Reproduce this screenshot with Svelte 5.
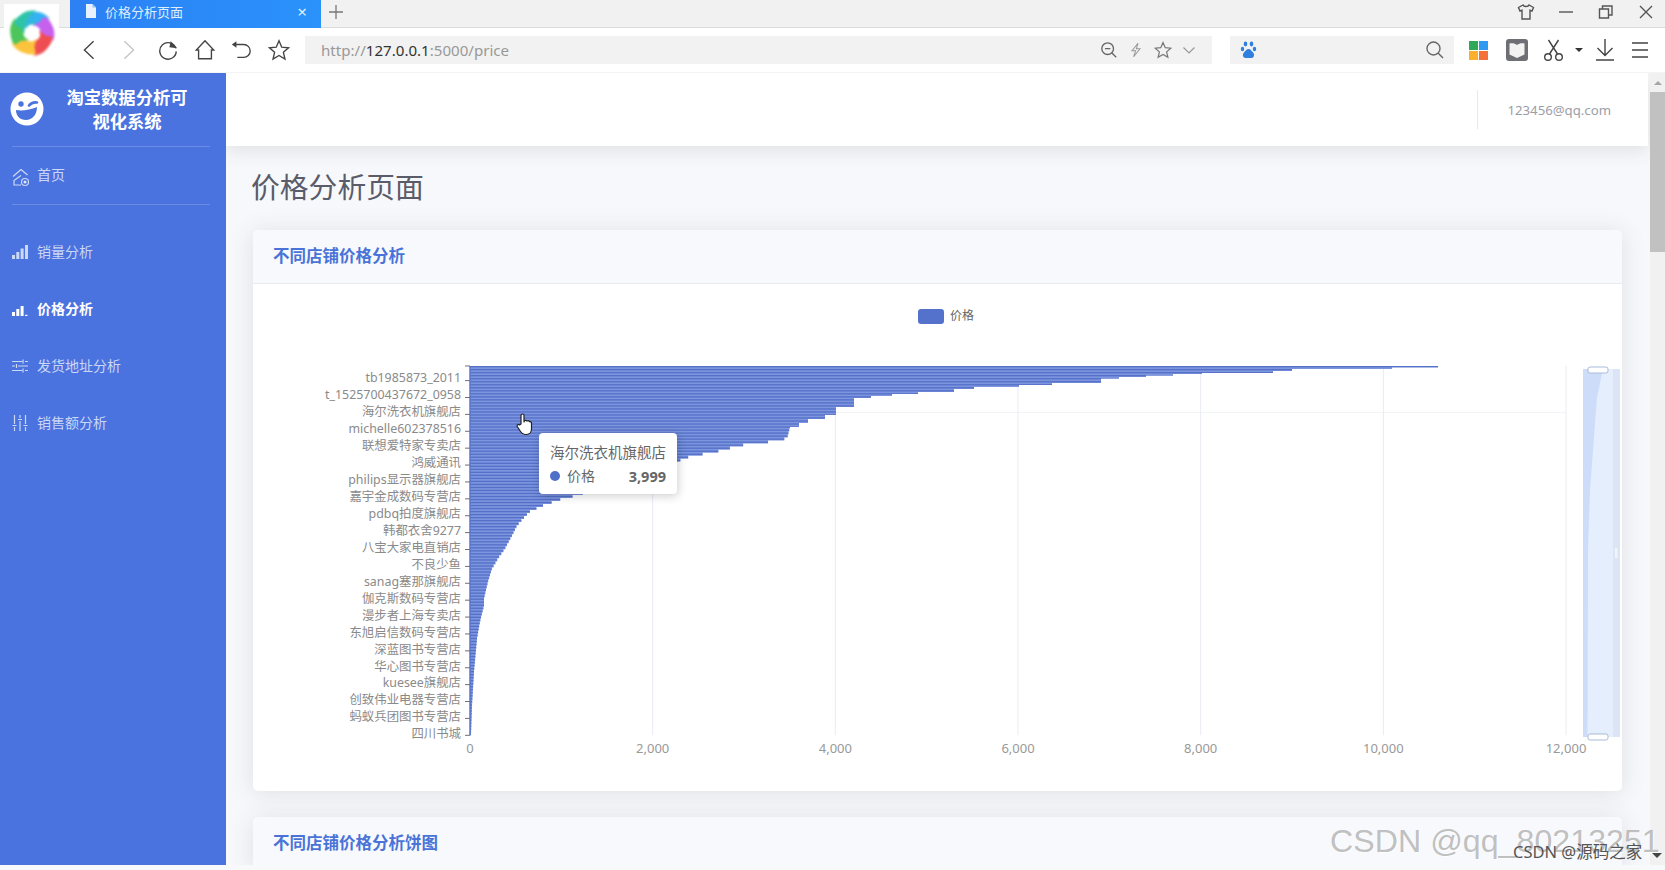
<script lang="ts">
const navItems = [
	{ label: '销量分析', icon: 'bars', active: false },
	{ label: '价格分析', icon: 'bars', active: true },
	{ label: '发货地址分析', icon: 'hsliders', active: false },
	{ label: '销售额分析', icon: 'vsliders', active: false },
]

const shopLabels = [
	'tb1985873_2011', 't_1525700437672_0958', '海尔洗衣机旗舰店', 'michelle602378516',
	'联想爱特家专卖店', '鸿威通讯', 'philips显示器旗舰店', '嘉宇金成数码专营店',
	'pdbq拍度旗舰店', '韩都衣舍9277', '八宝大家电直销店', '不良少鱼',
	'sanag塞那旗舰店', '伽克斯数码专营店', '漫步者上海专卖店', '东旭启信数码专营店',
	'深蓝图书专营店', '华心图书专营店', 'kuesee旗舰店', '创致伟业电器专营店',
	'蚂蚁兵团图书专营店', '四川书城',
]

// chart geometry in page pixels, the svg viewBox starts at the card body origin
const axisX = 470
const plotTop = 366
const plotBottom = 735.3
const unit = 182.67
const rowHeight = 3.02
const xTicks = [0, 1, 2, 3, 4, 5, 6].map((i) => ({
	x: axisX + i * unit,
	label: i === 0 ? '0' : `${i * 2},000`,
}))

// top of the curve: [y, x], the bar end stays at x until y
const steps = [
	[367.5, 1438], [369, 1392], [371, 1292], [373, 1273], [374, 1202], [375.5, 1173],
	[377, 1146], [378.5, 1119], [383, 1101], [385, 1052], [387, 1019], [389, 974],
	[392, 954], [394, 918], [396, 892], [398, 871], [407, 854], [415, 836], [419, 825],
	[423, 808], [427, 799], [428.5, 790],
]
// rest of the curve, sampled once per bar row
const tail = [
	[428.5, 790], [440, 787], [443, 773], [447, 740], [453, 717], [458, 690], [463, 677],
	[480, 625], [497, 577], [500, 563], [507, 543], [513, 530], [518, 525], [527, 517],
	[537, 512], [550, 505], [560, 498], [570, 492], [583, 488], [600, 484], [607, 484],
	[623, 480], [640, 477], [673, 474], [707, 472], [735.3, 471],
]

function tailEnd(y: number) {
	for (let i = 1; i < tail.length; i++) {
		if (y <= tail[i][0]) {
			const [y0, x0] = tail[i - 1]
			const [y1, x1] = tail[i]
			return x0 + ((y - y0) / (y1 - y0)) * (x1 - x0)
		}
	}
	return axisX + 1
}

function outlinePath() {
	let d = `M${axisX} ${plotTop}`
	let prevY = plotTop
	for (const [y, x] of steps) {
		d += `L${x} ${prevY}L${x} ${y}`
		prevY = y
	}
	while (prevY < plotBottom) {
		const next = Math.min(prevY + rowHeight, plotBottom)
		const x = tailEnd(next)
		d += `L${x} ${prevY}L${x} ${next}`
		prevY = next
	}
	return d + `L${axisX} ${plotBottom}Z`
}

const outline = outlinePath()

const stripes = Array.from(
	{ length: Math.floor((plotBottom - plotTop) / rowHeight) },
	(_, i) => plotTop + i * rowHeight,
)

const ticks = shopLabels.map((label, i) => {
	const fromBottom = shopLabels.length - 1 - i
	return { label, tickY: plotBottom - fromBottom * 16.89, labelY: 733.8 - fromBottom * 16.95 }
})

const petals = [
	{ color: '#35b2f2', angle: -40 },
	{ color: '#c662ee', angle: 20 },
	{ color: '#f04e52', angle: 85 },
	{ color: '#fbc43c', angle: 155 },
	{ color: '#4cc65a', angle: 220 },
	{ color: '#30c4a8', angle: 280 },
]
</script>

<div class="browser">
	<div class="logo">
		<svg width="55" height="56" viewBox="-28 -29 55 56">
			<g class="swirl">
				{#each petals as petal}
					<circle r="15" fill="none" stroke={petal.color} stroke-width="13" pathLength="6" stroke-dasharray="1.2 4.800" transform="rotate({petal.angle - 75})" />
				{/each}
				{#each petals as petal}
					<path d="M-2-7C8-23 23-15 23 1 19-7 9-10-2-7Z" fill={petal.color} opacity="0.8" transform="rotate({petal.angle})" />
				{/each}
			</g>
			<circle r="5" fill="#fff" opacity="0.95" />
		</svg>
	</div>

	<div class="tabstrip">
		<div class="tab">
			<svg width="14" height="14" viewBox="0 0 14 14"><path d="M2 0h6.500L12 3.500V14H2z" fill="#e8f2fe" /><path d="M8.500 0v3.500H12" fill="#8fc0f8" /></svg>
			<span class="tab-title">价格分析页面</span>
			<span class="tab-close">×</span>
		</div>
		<svg class="newtab" width="16" height="16" viewBox="0 0 16 16"><path d="M8 1v14M1 8h14" stroke="#777" stroke-width="1.300" /></svg>
		<div class="window-btns">
			<svg width="20" height="20" viewBox="0 0 20 20" fill="none" stroke="#555" stroke-width="1.400"><path d="M7 3 2.500 5.500 4 9l2-.7V17h8V8.300l2 .7 1.500-3.500L13 3c-.6 2-5.400 2-6 0z" /></svg>
			<svg width="20" height="20" viewBox="0 0 20 20"><path d="M3 10h14" stroke="#555" stroke-width="1.400" /></svg>
			<svg width="20" height="20" viewBox="0 0 20 20" fill="none" stroke="#555" stroke-width="1.400"><path d="M3.500 7h9v9h-9zM6.500 7V4h9.500v9h-3.500" /></svg>
			<svg width="20" height="20" viewBox="0 0 20 20"><path d="M4 4l12 12M16 4 4 16" stroke="#555" stroke-width="1.400" /></svg>
		</div>
	</div>

	<div class="toolbar">
		<button class="tool" type="button" aria-label="后退">
			<svg viewBox="0 0 24 24"><path d="M17 2.500 7 12l10 9.500" /></svg>
		</button>
		<button class="tool dim" type="button" aria-label="前进">
			<svg viewBox="0 0 24 24"><path d="M7 2.500 17 12 7 21.500" /></svg>
		</button>
		<button class="tool" type="button" aria-label="刷新">
			<svg viewBox="0 0 24 24"><path d="M20.500 10A9 9 0 1 0 21 13.500" /><path d="M15 2.500l7 7.500-8.500-1z" fill="#444" stroke="none" /></svg>
		</button>
		<button class="tool" type="button" aria-label="主页">
			<svg viewBox="0 0 24 24"><path d="M12 2 2.500 12H5v9.500h14V12h2.500z" /></svg>
		</button>
		<button class="tool" type="button" aria-label="撤销">
			<svg viewBox="0 0 24 24"><path d="M6 6h9a7 7 0 0 1 0 14H8" /><path d="M2 6l5-3.500v7z" fill="#444" stroke="none" /></svg>
		</button>
		<button class="tool" type="button" aria-label="收藏">
			<svg viewBox="0 0 24 24"><path d="M12 2l3 6.900 7.400.7-5.600 4.900 1.700 7.300-6.500-3.800-6.500 3.800 1.700-7.300-5.600-4.900L9 8.900z" /></svg>
		</button>

		<div class="address">
			<span class="url">http://<b>127.0.0.1</b>:5000/price</span>
			<div class="address-icons">
				<svg width="18" height="18" viewBox="0 0 20 20" fill="none" stroke="#666" stroke-width="1.500"><circle cx="8.500" cy="8.500" r="6.500" /><path d="M5.500 8.500h6M13 13l5 5" /></svg>
				<svg width="16" height="18" viewBox="0 0 20 20" fill="none" stroke="#999" stroke-width="1.300"><path d="M12.500 1.500 5 11h4.500L7 18.500 15 8.500h-4.500z" /></svg>
				<svg width="18" height="18" viewBox="0 0 24 24" fill="none" stroke="#777" stroke-width="1.600"><path d="M12 2l3 6.900 7.400.7-5.600 4.900 1.700 7.300-6.500-3.800-6.500 3.800 1.700-7.300-5.600-4.900L9 8.900z" /></svg>
				<svg width="14" height="20" viewBox="0 0 14 20" fill="none" stroke="#999" stroke-width="1.200"><path d="M1.500 7.500 7 13l5.500-5.500" /></svg>
			</div>
		</div>

		<div class="searchbox">
			<svg width="18" height="20" viewBox="0 0 18 20" fill="#2e7fe0"><ellipse cx="5.500" cy="4" rx="1.800" ry="2.400" /><ellipse cx="11.500" cy="4" rx="1.800" ry="2.400" /><ellipse cx="2.500" cy="9" rx="1.700" ry="2.200" /><ellipse cx="14.500" cy="9" rx="1.700" ry="2.200" /><path d="M8.500 9c2 0 3 2 4.500 3.500 2 2 1 5.500-1.500 5.500h-6C3 18 2 14.500 4 12.500 5.500 11 6.500 9 8.500 9z" /></svg>
			<svg class="search-icon" width="20" height="20" viewBox="0 0 20 20" fill="none" stroke="#666" stroke-width="1.400"><circle cx="8.500" cy="8.500" r="6.500" /><path d="M13 13l5 5" /></svg>
		</div>

		<svg class="grid-icon" width="19" height="19" viewBox="0 0 19 19"><rect width="9" height="9" fill="#2fa85a" /><rect x="10" width="9" height="9" fill="#2e9bf0" /><rect y="10" width="9" height="9" fill="#fbb02d" /><rect x="10" y="10" width="9" height="9" fill="#f5713a" /></svg>
		<svg class="shield-icon" width="22" height="22" viewBox="0 0 22 22"><rect width="22" height="22" rx="3" fill="#6e6f75" /><path d="M3.500 4.500c3-.6 5.500 0 7.500 1.500 2-1.500 4.500-2.100 7.500-1.500v11L11 19l-7.500-3.500z" fill="#f2f2f2" /></svg>
		<svg class="scissors-icon" width="22" height="24" viewBox="0 0 22 24" fill="none" stroke="#444" stroke-width="1.400"><circle cx="5" cy="19" r="3.300" /><circle cx="16" cy="19" r="3.300" /><path d="M6.500 16 15.500 2M14.500 16 5.500 2" /></svg>
		<span class="caret"></span>
		<svg class="download-icon" width="22" height="24" viewBox="0 0 22 24" fill="none" stroke="#444" stroke-width="1.400"><path d="M11 1v16M3.500 10l7.500 7.500 7.500-7.500M2 22h18" /></svg>
		<svg class="menu-icon" width="20" height="20" viewBox="0 0 20 20" stroke="#444" stroke-width="1.400"><path d="M2 3h16M2 10h16M2 17h16" /></svg>
	</div>

	<div class="app">
		<aside class="sidebar">
			<div class="brand">
				<svg class="brand-logo" width="34" height="34" viewBox="0 0 34 34">
					<circle cx="17" cy="17" r="16.500" fill="#fff" />
					<circle cx="11" cy="12" r="2.700" fill="#4a73df" />
					<path d="M19 13.500c2-2.500 5-3.500 8-3" stroke="#4a73df" stroke-width="2.600" fill="none" stroke-linecap="round" />
					<path d="M6 18c6 1 14 0 21-3 0 8-5 13-11 13-6 0-10-4-10-10z" fill="#4a73df" />
				</svg>
				<div class="brand-text">淘宝数据分析可<br />视化系统</div>
			</div>
			<hr />
			<a class="nav-link home" href="#home">
				<svg width="18" height="20" viewBox="0 0 18 20" fill="none" stroke="currentColor" stroke-width="1.200"><path d="M9 8.500 2 13.500V18h7M9 2.500 1 9.500M9 2.500l6.500 5.500" /><circle cx="13" cy="15" r="3.500" /><circle cx="13" cy="15" r="1" fill="currentColor" /></svg>
				<span>首页</span>
			</a>
			<hr />
			<nav class="nav">
				{#each navItems as item}
					<a class="nav-link" class:active={item.active} href="#{item.label}">
						{#if item.icon === 'bars'}
							<svg width="16" height="14" viewBox="0 0 16 14" fill="currentColor">
								<rect x="0" y="10" width="3" height="4" />
								<rect x="4.300" y="7" width="3" height="7" />
								<rect x="8.600" y={item.active ? 4 : 3.500} width="3" height={item.active ? 10 : 10.500} />
								{#if item.active}<rect x="13" y="12.800" width="2.500" height="1.200" />{:else}<rect x="13" y="0" width="3" height="14" />{/if}
							</svg>
						{:else if item.icon === 'hsliders'}
							<svg width="16" height="14" viewBox="0 0 16 14" stroke="currentColor" stroke-width="1.200"><path d="M0 2.500h10M13 2.500h3M0 7h3M6 7h10M0 11.500h10M13 11.500h3M11 .5v4M4.500 5v4M11 9.500v4" /></svg>
						{:else}
							<svg width="16" height="16" viewBox="0 0 16 16" stroke="currentColor" stroke-width="1.200"><path d="M2.500 0v9M2.500 12v4M8 0v3M8 6v10M13.500 0v9M13.500 12v4M.5 10.500h4M6 4.500h4M11.500 10.500h4" /></svg>
						{/if}
						<span>{item.label}</span>
					</a>
				{/each}
			</nav>
		</aside>

		<main class="main">
			<header class="topbar">
				<div class="divider"></div>
				<span class="email">123456@qq.com</span>
			</header>
			<h1 class="page-title">价格分析页面</h1>

			<section class="card">
				<h2 class="card-header">不同店铺价格分析</h2>
				<div class="chart">
					<svg width="1369" height="507" viewBox="253 284 1369 507">
						<defs>
							<clipPath id="bars-clip"><path d={outline} /></clipPath>
						</defs>
						<rect x="918" y="309" width="26" height="15" rx="3" fill="#5472cb" />
						<text x="950" y="315.500" class="legend-label" dominant-baseline="central">价格</text>

						<line x1={axisX} x2="1566" y1="412.500" y2="412.500" stroke="#f3f4f6" />
						{#each xTicks as tick, i}
							{#if i > 0}
								<line x1={tick.x} x2={tick.x} y1={plotTop} y2={plotBottom} stroke="#e8ecf3" />
							{/if}
							<text x={tick.x} y="748" class="x-label" text-anchor="middle" dominant-baseline="central">{tick.label}</text>
						{/each}

						<path d={outline} fill="#7d95de" />
						<g clip-path="url(#bars-clip)">
							{#each stripes as y}
								<rect x={axisX} y={y} width="980" height="1.300" fill="#5470c8" />
							{/each}
						</g>

						<line x1={axisX} x2={axisX} y1={plotTop} y2={plotBottom} stroke="#5a76c8" stroke-width="1.500" />
						<line x1="465" x2={axisX} y1={plotTop} y2={plotTop} stroke="#6e7079" />
						{#each ticks as tick}
							<line x1="465" x2={axisX} y1={tick.tickY} y2={tick.tickY} stroke="#6e7079" />
							<text x="461" y={tick.labelY} class="y-label" text-anchor="end" dominant-baseline="central">{tick.label}</text>
						{/each}

						<!-- data zoom slider -->
						<rect x="1583" y="369" width="37" height="368" fill="#dbe5f5" />
						<rect x="1588" y="369" width="25" height="368" fill="#e4eefd" />
						<path d="M1583 369H1603L1597 397 1593 450 1590 490 1588 550 1587 737H1583Z" fill="#ccdcf9" />
						<rect x="1588" y="367" width="20" height="6" rx="2" fill="#fff" stroke="#a9bbd8" />
						<rect x="1588" y="734" width="20" height="6" rx="2" fill="#fff" stroke="#a9bbd8" />
						<rect x="1615" y="548" width="2.500" height="10" fill="#f0f4fb" />
					</svg>

					<div class="tooltip">
						<div class="tooltip-title">海尔洗衣机旗舰店</div>
						<div class="tooltip-row">
							<span class="dot"></span>
							<span class="series">价格</span>
							<b>3,999</b>
						</div>
					</div>

					<svg class="hand" width="18" height="24" viewBox="0 0 18 24">
						<path d="M5 12V3.500a1.500 1.500 0 0 1 3 0V10l.5-1.500c1.500-.5 2 0 2.500.5 1-.5 2-.2 2.500.7 1.200-.2 2 .5 2 1.800V17c0 3-2 5.500-5 5.500H9c-2.500 0-3.500-1.500-4.500-3L1.300 14.500c-.8-1.500 1-2.800 2.200-1.500z" fill="#fff" stroke="#222" stroke-width="1.200" stroke-linejoin="round" />
					</svg>
				</div>
			</section>

			<section class="card">
				<h2 class="card-header">不同店铺价格分析饼图</h2>
			</section>
		</main>

		<div class="scrollbar">
			<span class="scroll-up"></span>
			<div class="thumb"></div>
		</div>
	</div>
	<div class="bottom-strip"></div>

	<span class="wm-large">CSDN @qq_80213251</span>
	<span class="wm-small">CSDN @源码之家</span>
	<span class="wm-caret"></span>
</div>

<style>
	:global(body) {
		margin: 0;
		background: #f7f8fb;
	}

	.browser {
		position: relative;
		display: flex;
		flex-direction: column;
		height: 870px;
		overflow: hidden;
		font-family: "Noto Sans", "Noto Sans CJK SC", sans-serif;
		color: #666;
	}

	.logo {
		position: absolute;
		left: 4px;
		top: 4px;
		width: 55px;
		height: 56px;
		background: #fff;
	}

	.swirl {
		filter: blur(1.2px);
	}

	.tabstrip {
		display: flex;
		align-items: center;
		flex: 0 0 28px;
		padding-left: 70px;
		background: #f1f1f1;
		box-shadow: inset 0 -1px 0 #dcdcdc;
	}

	.tab {
		display: flex;
		align-items: center;
		width: 251px;
		height: 28px;
		box-sizing: border-box;
		padding: 0 14px 6px 14px;
		background: linear-gradient(90deg, #2c80f4, #2a92fb);
		color: #dfedfd;
		font-size: 13px;
	}

	.tab-title {
		margin-left: 7px;
	}

	.tab-close {
		margin-left: auto;
		font-size: 17px;
		line-height: 1;
	}

	.newtab {
		margin: 0 0 4px 7px;
	}

	.window-btns {
		display: flex;
		gap: 20px;
		margin: 0 9px 4px auto;
	}

	.toolbar {
		display: flex;
		align-items: center;
		flex: 0 0 44px;
		padding-left: 77px;
		background: #fff;
		border-bottom: 1px solid #f4f4f4;
	}

	.tool {
		display: flex;
		align-items: center;
		justify-content: center;
		width: 24px;
		height: 24px;
		margin-right: 14px;
		padding: 0;
		border: none;
		background: none;
	}

	.tool:nth-of-type(1) {
		margin-right: 16px;
	}

	.tool:nth-of-type(2) {
		margin-right: 15px;
	}

	.tool:nth-of-type(3) {
		margin-right: 13px;
	}

	.tool:nth-of-type(4) {
		margin-right: 12px;
	}

	.tool svg {
		width: 22px;
		height: 22px;
		fill: none;
		stroke: #444;
		stroke-width: 1.500;
	}

	.tool.dim svg {
		stroke: #c4c4c4;
	}

	.address {
		display: flex;
		align-items: center;
		justify-content: space-between;
		width: 907px;
		height: 28px;
		padding: 0 16px;
		box-sizing: border-box;
		background: #f2f2f2;
		font-size: 15.100px;
		color: #999;
	}

	.url b {
		font-weight: 400;
		color: #333;
	}

	.address-icons {
		display: flex;
		align-items: center;
		gap: 10px;
	}

	.searchbox {
		display: flex;
		align-items: center;
		justify-content: space-between;
		width: 224px;
		height: 28px;
		margin-left: 18px;
		padding: 0 9px 0 10px;
		box-sizing: border-box;
		background: #f2f2f2;
	}

	.grid-icon {
		margin-left: 15px;
	}

	.shield-icon {
		margin-left: 18px;
	}

	.scissors-icon {
		margin-left: 15px;
	}

	.caret {
		width: 0;
		height: 0;
		margin-left: 10px;
		border: 4px solid transparent;
		border-top-color: #333;
		border-bottom: none;
	}

	.download-icon {
		margin-left: 11px;
	}

	.menu-icon {
		margin-left: 14px;
	}

	.app {
		display: flex;
		flex: 1;
		min-height: 0;
	}

	.sidebar {
		display: flex;
		flex-direction: column;
		flex: 0 0 226px;
		background: #4a73df;
		color: rgba(255, 255, 255, 0.72);
		font-size: 14px;
	}

	.sidebar hr {
		width: 198px;
		margin: 0 0 0 12px;
		border: none;
		border-top: 1px solid rgba(255, 255, 255, 0.18);
	}

	.brand {
		display: flex;
		align-items: center;
		height: 73px;
		padding-left: 10px;
		color: #fff;
	}

	.brand-logo {
		margin-bottom: 2px;
	}

	.brand-text {
		width: 142px;
		margin-left: 12px;
		font-size: 17.300px;
		font-weight: 700;
		line-height: 24px;
		text-align: center;
	}

	.nav-link {
		display: flex;
		align-items: center;
		gap: 9px;
		height: 57px;
		padding-left: 12px;
		color: inherit;
		text-decoration: none;
	}

	.nav-link span {
		margin-bottom: 2px;
	}

	.nav-link svg {
		flex: 0 0 auto;
		width: 16px;
	}

	.nav-link.home {
		gap: 7px;
	}

	.nav-link.home span {
		margin-bottom: 4px;
	}

	.nav-link.home svg {
		width: 18px;
		margin-top: 3px;
	}

	.nav-link.active {
		color: #fff;
		font-weight: 700;
	}

	.nav {
		padding-top: 18px;
	}

	.main {
		flex: 1;
		min-width: 0;
		padding: 0 28px 0 27px;
		overflow: hidden;
		background: #f7f8fb;
	}

	.topbar {
		display: flex;
		align-items: center;
		justify-content: flex-end;
		height: 73px;
		margin: 0 -26px 0 -27px;
		padding-right: 37px;
		background: #fff;
		box-shadow: 0 4px 18px rgba(58, 59, 69, 0.13);
	}

	.divider {
		width: 1px;
		height: 39px;
		margin-right: 29px;
		background: #e6e8ee;
	}

	.email {
		font-size: 13.200px;
		color: #9a9ea8;
	}

	.page-title {
		display: flex;
		align-items: center;
		height: 78px;
		margin: 0 0 6px -2px;
		font-size: 28.800px;
		font-weight: 400;
		color: #5a5c69;
	}

	.card {
		margin-bottom: 26px;
		border-radius: 5px;
		background: #fff;
		box-shadow: 0 2px 24px rgba(58, 59, 69, 0.13);
		overflow: hidden;
	}

	.card-header {
		height: 54px;
		margin: 0;
		padding-left: 20px;
		box-sizing: border-box;
		background: #f8f9fc;
		border-bottom: 1px solid #e9ebf2;
		color: #4a73d8;
		font-size: 16.500px;
		font-weight: 700;
		line-height: 52px;
	}

	.chart {
		position: relative;
		height: 507px;
	}

	.chart > svg:first-child {
		display: block;
	}

	.legend-label {
		font-size: 12px;
		fill: #666;
	}

	.x-label {
		font-size: 13px;
		fill: #999;
	}

	.y-label {
		font-size: 12.400px;
		fill: #8a8a8a;
	}

	.tooltip {
		position: absolute;
		left: 286px;
		top: 149px;
		width: 138px;
		height: 61px;
		box-sizing: border-box;
		padding: 8px 11px;
		border-radius: 4px;
		background: #fff;
		box-shadow: 1px 2px 10px rgba(0, 0, 0, 0.2);
		font-size: 14.500px;
		line-height: 22px;
		color: #666;
	}

	.tooltip-title {
		white-space: nowrap;
	}

	.tooltip-row {
		display: flex;
		align-items: center;
		margin-top: 2px;
		font-size: 14px;
	}

	.dot {
		width: 10px;
		height: 10px;
		margin-right: 7px;
		border-radius: 50%;
		background: #4f70c8;
	}

	.tooltip-row b {
		margin-left: auto;
		font-size: 14.500px;
	}

	.hand {
		position: absolute;
		left: 263px;
		top: 128px;
	}

	.scrollbar {
		flex: 0 0 15px;
		background: #f1f1f1;
	}

	.scroll-up {
		display: block;
		width: 0;
		height: 0;
		margin: 8px auto 6.500px;
		border: 4.500px solid transparent;
		border-bottom-color: #a6a6a6;
		border-top: none;
	}

	.thumb {
		height: 160px;
		background: #c1c1c1;
	}

	.bottom-strip {
		flex: 0 0 5px;
		background: #f8f9fb;
	}

	.wm-large {
		position: absolute;
		left: 1330px;
		top: 821px;
		font-family: "Liberation Sans", sans-serif;
		font-size: 32.200px;
		line-height: 40px;
		white-space: nowrap;
		color: rgba(140, 140, 140, 0.55);
		text-shadow: 1px 1px 1px rgba(255, 255, 255, 0.8);
	}

	.wm-small {
		position: absolute;
		left: 1513px;
		top: 841px;
		font-size: 16.500px;
		line-height: 22px;
		white-space: nowrap;
		color: #555;
	}

	.wm-caret {
		position: absolute;
		left: 1652px;
		top: 853px;
		border: 5px solid transparent;
		border-top-color: #444;
		border-bottom: none;
	}
</style>
